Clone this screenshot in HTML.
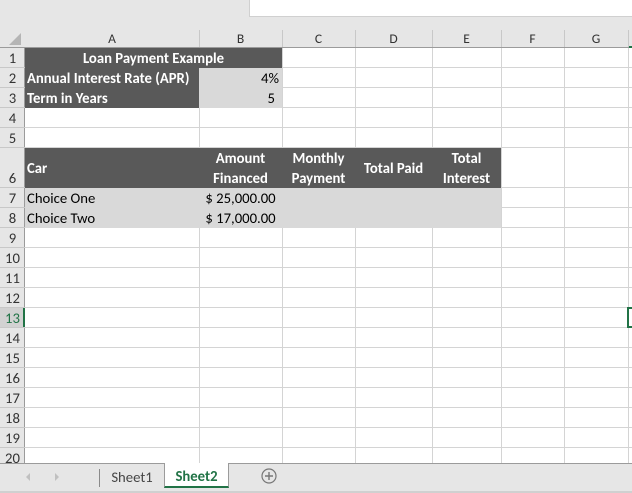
<!DOCTYPE html><html><head><style>
*{margin:0;padding:0;box-sizing:border-box}
body{width:632px;height:493px;overflow:hidden;background:#fff;font-family:Calibri,"Liberation Sans",sans-serif;font-size:14.7px;position:relative}
.a{position:absolute}
.t{position:absolute;white-space:nowrap;line-height:21px}
.w{color:#fff;font-weight:bold}
.hl{position:absolute;left:25px;width:607px;height:1px;background:#d4d4d4}
.vl{position:absolute;top:48px;height:415px;width:1px;background:#d4d4d4}
.rh{position:absolute;left:0;width:25px;text-align:center;color:#333;font-size:14.7px}
.ch{position:absolute;top:29px;height:19px;line-height:19px;text-align:center;color:#333;font-size:13.5px}
</style></head><body>
<div class="a" style="left:0;top:0;width:632px;height:48px;background:#e6e6e6"></div>
<div class="a" style="left:249px;top:0;width:383px;height:17px;background:#fff;border-left:1px solid #d0d0d0;border-bottom:1px solid #d0d0d0"></div>
<div class="a" style="left:0;top:47px;width:632px;height:1px;background:#9b9b9b"></div>
<div class="a" style="left:0;top:48px;width:25px;height:415px;background:#e6e6e6;border-right:1px solid #9b9b9b"></div>
<svg class="a" style="left:8px;top:33px" width="14" height="12"><polygon points="13,0 13,12 1,12" fill="#b5b5b5"/></svg>
<div class="ch" style="left:25px;width:174px">A</div>
<div class="ch" style="left:199px;width:83px">B</div>
<div class="ch" style="left:282px;width:73px">C</div>
<div class="ch" style="left:355px;width:77px">D</div>
<div class="ch" style="left:432px;width:69px">E</div>
<div class="ch" style="left:501px;width:63px">F</div>
<div class="ch" style="left:564px;width:64px">G</div>
<div class="a" style="left:199px;top:30px;width:1px;height:17px;background:#c8c8c8"></div>
<div class="a" style="left:282px;top:30px;width:1px;height:17px;background:#c8c8c8"></div>
<div class="a" style="left:355px;top:30px;width:1px;height:17px;background:#c8c8c8"></div>
<div class="a" style="left:432px;top:30px;width:1px;height:17px;background:#c8c8c8"></div>
<div class="a" style="left:501px;top:30px;width:1px;height:17px;background:#c8c8c8"></div>
<div class="a" style="left:564px;top:30px;width:1px;height:17px;background:#c8c8c8"></div>
<div class="a" style="left:628px;top:30px;width:1px;height:17px;background:#c8c8c8"></div>
<div class="a" style="left:629px;top:46px;width:3px;height:2px;background:#217346"></div>

<div class="hl" style="top:67px"></div><div class="hl" style="top:87px"></div><div class="hl" style="top:107px"></div><div class="hl" style="top:127px"></div><div class="hl" style="top:147px"></div><div class="hl" style="top:187px"></div><div class="hl" style="top:207px"></div><div class="hl" style="top:227px"></div><div class="hl" style="top:247px"></div><div class="hl" style="top:267px"></div><div class="hl" style="top:287px"></div><div class="hl" style="top:307px"></div><div class="hl" style="top:327px"></div><div class="hl" style="top:347px"></div><div class="hl" style="top:367px"></div><div class="hl" style="top:387px"></div><div class="hl" style="top:407px"></div><div class="hl" style="top:427px"></div><div class="hl" style="top:447px"></div>
<div class="vl" style="left:199px"></div><div class="vl" style="left:282px"></div><div class="vl" style="left:355px"></div><div class="vl" style="left:432px"></div><div class="vl" style="left:501px"></div><div class="vl" style="left:564px"></div><div class="vl" style="left:628px"></div>
<div class="a" style="left:0;top:67px;width:25px;height:1px;background:#c8c8c8;box-shadow:0 20px #c8c8c8,0 40px #c8c8c8,0 60px #c8c8c8,0 80px #c8c8c8,0 120px #c8c8c8,0 140px #c8c8c8,0 160px #c8c8c8,0 180px #c8c8c8,0 200px #c8c8c8,0 220px #c8c8c8,0 240px #c8c8c8,0 260px #c8c8c8,0 280px #c8c8c8,0 300px #c8c8c8,0 320px #c8c8c8,0 340px #c8c8c8,0 360px #c8c8c8,0 380px #c8c8c8"></div>
<div class="a" style="left:0;top:308px;width:25px;height:19px;background:#d2d2d2;border-right:2px solid #217346"></div>

<div class="a" style="left:25px;top:48px;width:257px;height:20px;background:#595959"></div>
<div class="a" style="left:25px;top:68px;width:174px;height:40px;background:#595959"></div>
<div class="a" style="left:199px;top:68px;width:83px;height:40px;background:#d9d9d9"></div>
<div class="a" style="left:25px;top:148px;width:476px;height:40px;background:#595959"></div>
<div class="a" style="left:25px;top:188px;width:476px;height:40px;background:#d9d9d9"></div>
<div class="a" style="left:627px;top:307px;width:5px;height:21px;border:2px solid #217346;border-right:none"></div>

<div class="rh t" style="top:48px">1</div><div class="rh t" style="top:68px">2</div><div class="rh t" style="top:88px">3</div><div class="rh t" style="top:108px">4</div><div class="rh t" style="top:128px">5</div><div class="rh t" style="top:168px">6</div><div class="rh t" style="top:188px">7</div><div class="rh t" style="top:208px">8</div><div class="rh t" style="top:228px">9</div><div class="rh t" style="top:248px">10</div><div class="rh t" style="top:268px">11</div><div class="rh t" style="top:288px">12</div><div class="rh t" style="top:308px;color:#217346">13</div><div class="rh t" style="top:328px">14</div><div class="rh t" style="top:348px">15</div><div class="rh t" style="top:368px">16</div><div class="rh t" style="top:388px">17</div><div class="rh t" style="top:408px">18</div><div class="rh t" style="top:428px">19</div><div class="rh t" style="top:448px;height:15px;overflow:hidden">20</div>

<div class="t w" style="left:25px;width:257px;top:48px;text-align:center">Loan Payment Example</div>
<div class="t w" style="left:27px;top:68px">Annual Interest Rate (APR)</div>
<div class="t w" style="left:27px;top:88px">Term in Years</div>
<div class="t" style="left:199px;width:80px;top:68px;text-align:right">4%</div>
<div class="t" style="left:199px;width:76px;top:88px;text-align:right">5</div>
<div class="t w" style="left:27px;top:158px">Car</div>
<div class="t w" style="left:199px;width:83px;top:148px;text-align:center">Amount</div>
<div class="t w" style="left:199px;width:83px;top:168px;text-align:center">Financed</div>
<div class="t w" style="left:282px;width:73px;top:148px;text-align:center">Monthly</div>
<div class="t w" style="left:282px;width:73px;top:168px;text-align:center">Payment</div>
<div class="t w" style="left:355px;width:77px;top:158px;text-align:center">Total Paid</div>
<div class="t w" style="left:432px;width:69px;top:148px;text-align:center">Total</div>
<div class="t w" style="left:432px;width:69px;top:168px;text-align:center">Interest</div>
<div class="t" style="left:27px;top:188px">Choice One</div>
<div class="t" style="left:27px;top:208px">Choice Two</div>
<div class="t" style="left:199px;width:83px;top:188px;text-align:center">$ 25,000.00</div>
<div class="t" style="left:199px;width:83px;top:208px;text-align:center">$ 17,000.00</div>

<div class="a" style="left:0;top:463px;width:632px;height:30px;background:#e6e6e6;border-top:1px solid #9b9b9b;border-bottom:2px solid #d0d0d0"></div>
<div class="a" style="left:26px;top:473px;width:0;height:0;border-top:4px solid transparent;border-bottom:4px solid transparent;border-right:4px solid #c0c0c0"></div>
<div class="a" style="left:55px;top:473px;width:0;height:0;border-top:4px solid transparent;border-bottom:4px solid transparent;border-left:4px solid #c0c0c0"></div>
<div class="a" style="left:99px;top:469px;width:1px;height:18px;background:#8a8a8a"></div>
<div class="t" style="left:100px;width:64px;top:467px;text-align:center;color:#444">Sheet1</div>
<div class="a" style="left:164px;top:463px;width:65px;height:25px;background:#fff;border-left:1px solid #9b9b9b;border-right:1px solid #9b9b9b;border-bottom:2px solid #217346"></div>
<div class="t" style="left:164px;width:65px;top:466px;text-align:center;color:#217346;font-weight:bold">Sheet2</div>
<svg class="a" style="left:261px;top:468px" width="16" height="16"><circle cx="8" cy="8" r="7" fill="none" stroke="#777" stroke-width="1.2"/><path d="M8 4v8M4 8h8" stroke="#777" stroke-width="1.4"/></svg>
</body></html>
